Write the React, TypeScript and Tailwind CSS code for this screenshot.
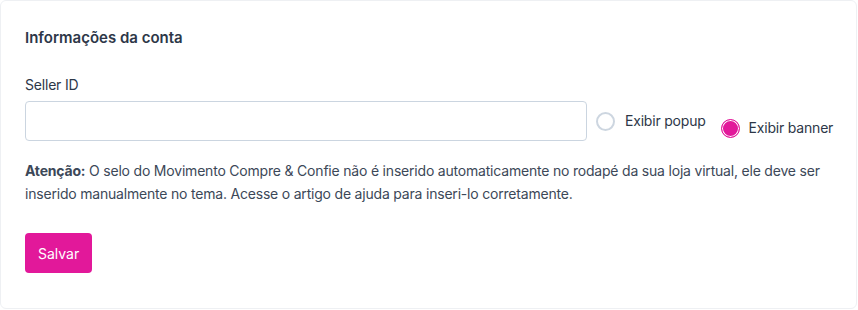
import { useState } from 'react';

export default function App() {
  const [mode, setMode] = useState<'popup' | 'banner'>('banner');

  return (
    <div className="w-[858px] h-[310px] bg-white font-['Inter',sans-serif] text-[#2d3748]">
      <div className="h-[309px] w-[857px] rounded-md border border-[#eef0f3] bg-white px-6 pt-[27px]">
        <h2 className="text-[15px] font-semibold leading-5 text-[#2d3748]">Informações da conta</h2>

        <label className="mt-[27px] block text-[14px] leading-5 tracking-[-0.2px] text-[#2d3748]">Seller ID</label>
        <div className="mt-[6px] flex items-start">
          <input
            type="text"
            className="h-10 w-[562px] shrink-0 rounded border border-[#cbd5e0] bg-white px-3 text-[14px] outline-none"
          />
          <button
            type="button"
            onClick={() => setMode('popup')}
            className="ml-[9px] mt-[10px] flex shrink-0 items-center gap-[10px] whitespace-nowrap"
          >
            <Radio checked={mode === 'popup'} />
            <span className="text-[14px] leading-5 tracking-[-0.2px] text-[#2d3748]">Exibir popup</span>
          </button>
          <button
            type="button"
            onClick={() => setMode('banner')}
            className="ml-[15px] mt-[17px] flex shrink-0 items-center gap-[9px] whitespace-nowrap"
          >
            <Radio checked={mode === 'banner'} />
            <span className="text-[14px] leading-5 tracking-[-0.2px] text-[#2d3748]">Exibir banner</span>
          </button>
        </div>

        <p className="mt-[18px] text-[14px] leading-[23px] tracking-[-0.2px] text-[#3c4858]">
          <strong className="font-bold">Atenção:</strong> O selo do Movimento Compre &amp; Confie não é inserido
          automaticamente no rodapé da sua loja virtual, ele deve ser inserido manualmente no tema. Acesse o artigo
          de ajuda para inseri-lo corretamente.
        </p>

        <button
          type="button"
          className="mt-[28px] h-10 rounded bg-[#e2189a] px-[13px] text-[14px] text-white"
        >
          Salvar
        </button>
      </div>
    </div>
  );
}

function Radio({ checked }: { checked: boolean }) {
  return checked ? (
    <span className="block h-[19px] w-[19px] rounded-full border border-[#e2189a] bg-[#e2189a] shadow-[inset_0_0_0_1px_#ffffff]" />
  ) : (
    <span className="block h-[19px] w-[19px] rounded-full border-2 border-[#cdd6e0] bg-white" />
  );
}
